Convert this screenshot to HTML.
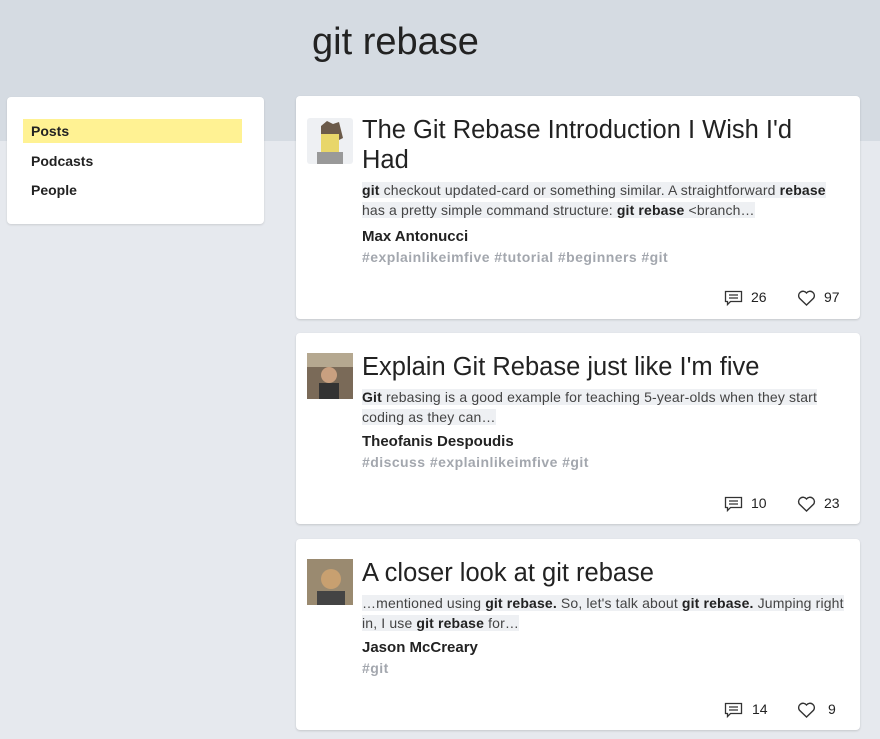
<!DOCTYPE html>
<html><head><style>
body{margin:0;width:880px;height:739px;background:#e6e9ee;font-family:"Liberation Sans",sans-serif;position:relative;overflow:hidden;color:#222}
.band{position:absolute;left:0;top:0;width:880px;height:141px;background:#d5dbe2}
h1{position:absolute;left:312px;top:21px;margin:0;font-size:38px;font-weight:normal;color:#222}
.side{position:absolute;left:7px;top:97px;width:257px;height:127px;background:#fff;border-radius:4px;box-shadow:0 1px 2px rgba(0,0,0,.12)}
.side div{position:absolute;left:16px;width:211px;height:24px;line-height:24px;padding-left:8px;font-weight:bold;font-size:14px;color:#222}
.card{position:absolute;left:296px;width:564px;background:#fff;border-radius:4px;box-shadow:0 1px 2px rgba(0,0,0,.15)}
.av{position:absolute;left:11px;top:22px;width:46px;height:46px;border-radius:3px}
.t{position:absolute;left:66px;top:19px;width:480px;font-size:25.5px;line-height:30px;color:#222}
.s{position:absolute;left:66px;font-size:14px;line-height:20px;color:#444;width:500px;white-space:nowrap;letter-spacing:0.15px}
.s span{background:#eef0f3}
.s b{color:#222}
.a{position:absolute;left:66px;font-size:15px;font-weight:bold;color:#222}
.g{position:absolute;left:66px;font-size:14px;font-weight:bold;color:#a3a7ae;letter-spacing:0.45px}
.f{position:absolute;left:0;width:564px;height:20px;font-size:14px;color:#222}
.f *{position:absolute;top:2px}
</style></head><body>
<div class="band"></div>
<h1>git rebase</h1>
<div class="side">
<div style="top:22px;background:#fff293">Posts</div>
<div style="top:52px">Podcasts</div>
<div style="top:81px">People</div>
</div>

<div class="card" style="top:96px;height:223px">
<div class="av" style="background:#eef0f3"><svg width="46" height="46"><path d="M14 8 L20 3 L26 6 L32 4 L34 12 L36 20 L32 22 L14 20 Z" fill="#6b5a4a"/><rect x="14" y="16" width="18" height="18" fill="#e8d66a"/><rect x="10" y="34" width="26" height="12" fill="#999"/></svg></div>
<div class="t">The Git Rebase Introduction I Wish I'd Had</div>
<div class="s" style="top:84px"><span><b>git</b> checkout updated-card or something similar. A straightforward <b>rebase</b></span><br><span>has a pretty simple command structure: <b>git rebase</b> &lt;branch…</span></div>
<div class="a" style="top:132px">Max Antonucci</div>
<div class="g" style="top:153px">#explainlikeimfive #tutorial #beginners #git</div>
<div class="f" style="top:192px"><svg style="left:428px" width="19" height="17" viewBox="0 0 19 17"><path d="M1.5 1.5h16v10h-11l-3 3v-3h-2z" fill="none" stroke="#333" stroke-width="1.3"/><path d="M5 5h9M5 8h9" stroke="#333" stroke-width="1.2"/></svg><span style="left:455px;top:1px">26</span><svg style="left:501px" width="19" height="17" viewBox="0 0 19 17"><path d="M9.5 15L2.5 8.3A4 4 0 0 1 9.5 3a4 4 0 0 1 7 5.3z" fill="none" stroke="#333" stroke-width="1.4"/></svg><span style="left:528px;top:1px">97</span></div>
</div>

<div class="card" style="top:333px;height:191px">
<div class="av" style="background:#5a4b3e;top:20px"><svg width="46" height="46"><rect width="46" height="46" fill="#7a6a58"/><rect x="0" y="0" width="46" height="14" fill="#b5a890"/><circle cx="22" cy="22" r="8" fill="#c9a080"/><rect x="12" y="30" width="20" height="16" fill="#333"/></svg></div>
<div class="t">Explain Git Rebase just like I'm five</div>
<div class="s" style="top:54px"><span><b>Git</b> rebasing is a good example for teaching 5-year-olds when they start</span><br><span>coding as they can…</span></div>
<div class="a" style="top:100px">Theofanis Despoudis</div>
<div class="g" style="top:121px">#discuss #explainlikeimfive #git</div>
<div class="f" style="top:161px"><svg style="left:428px" width="19" height="17" viewBox="0 0 19 17"><path d="M1.5 1.5h16v10h-11l-3 3v-3h-2z" fill="none" stroke="#333" stroke-width="1.3"/><path d="M5 5h9M5 8h9" stroke="#333" stroke-width="1.2"/></svg><span style="left:455px;top:1px">10</span><svg style="left:501px" width="19" height="17" viewBox="0 0 19 17"><path d="M9.5 15L2.5 8.3A4 4 0 0 1 9.5 3a4 4 0 0 1 7 5.3z" fill="none" stroke="#333" stroke-width="1.4"/></svg><span style="left:528px;top:1px">23</span></div>
</div>

<div class="card" style="top:539px;height:191px">
<div class="av" style="top:20px"><svg width="46" height="46"><rect width="46" height="46" fill="#9a8a70"/><circle cx="24" cy="20" r="10" fill="#c8a070"/><rect x="10" y="32" width="28" height="14" fill="#444"/></svg></div>
<div class="t">A closer look at git rebase</div>
<div class="s" style="top:54px"><span>…mentioned using <b>git rebase.</b> So, let's talk about <b>git rebase.</b> Jumping right</span><br><span>in, I use <b>git rebase</b> for…</span></div>
<div class="a" style="top:100px">Jason McCreary</div>
<div class="g" style="top:121px">#git</div>
<div class="f" style="top:161px"><svg style="left:428px" width="19" height="17" viewBox="0 0 19 17"><path d="M1.5 1.5h16v10h-11l-3 3v-3h-2z" fill="none" stroke="#333" stroke-width="1.3"/><path d="M5 5h9M5 8h9" stroke="#333" stroke-width="1.2"/></svg><span style="left:456px;top:1px">14</span><svg style="left:501px" width="19" height="17" viewBox="0 0 19 17"><path d="M9.5 15L2.5 8.3A4 4 0 0 1 9.5 3a4 4 0 0 1 7 5.3z" fill="none" stroke="#333" stroke-width="1.4"/></svg><span style="left:532px;top:1px">9</span></div>
</div>
</body></html>
